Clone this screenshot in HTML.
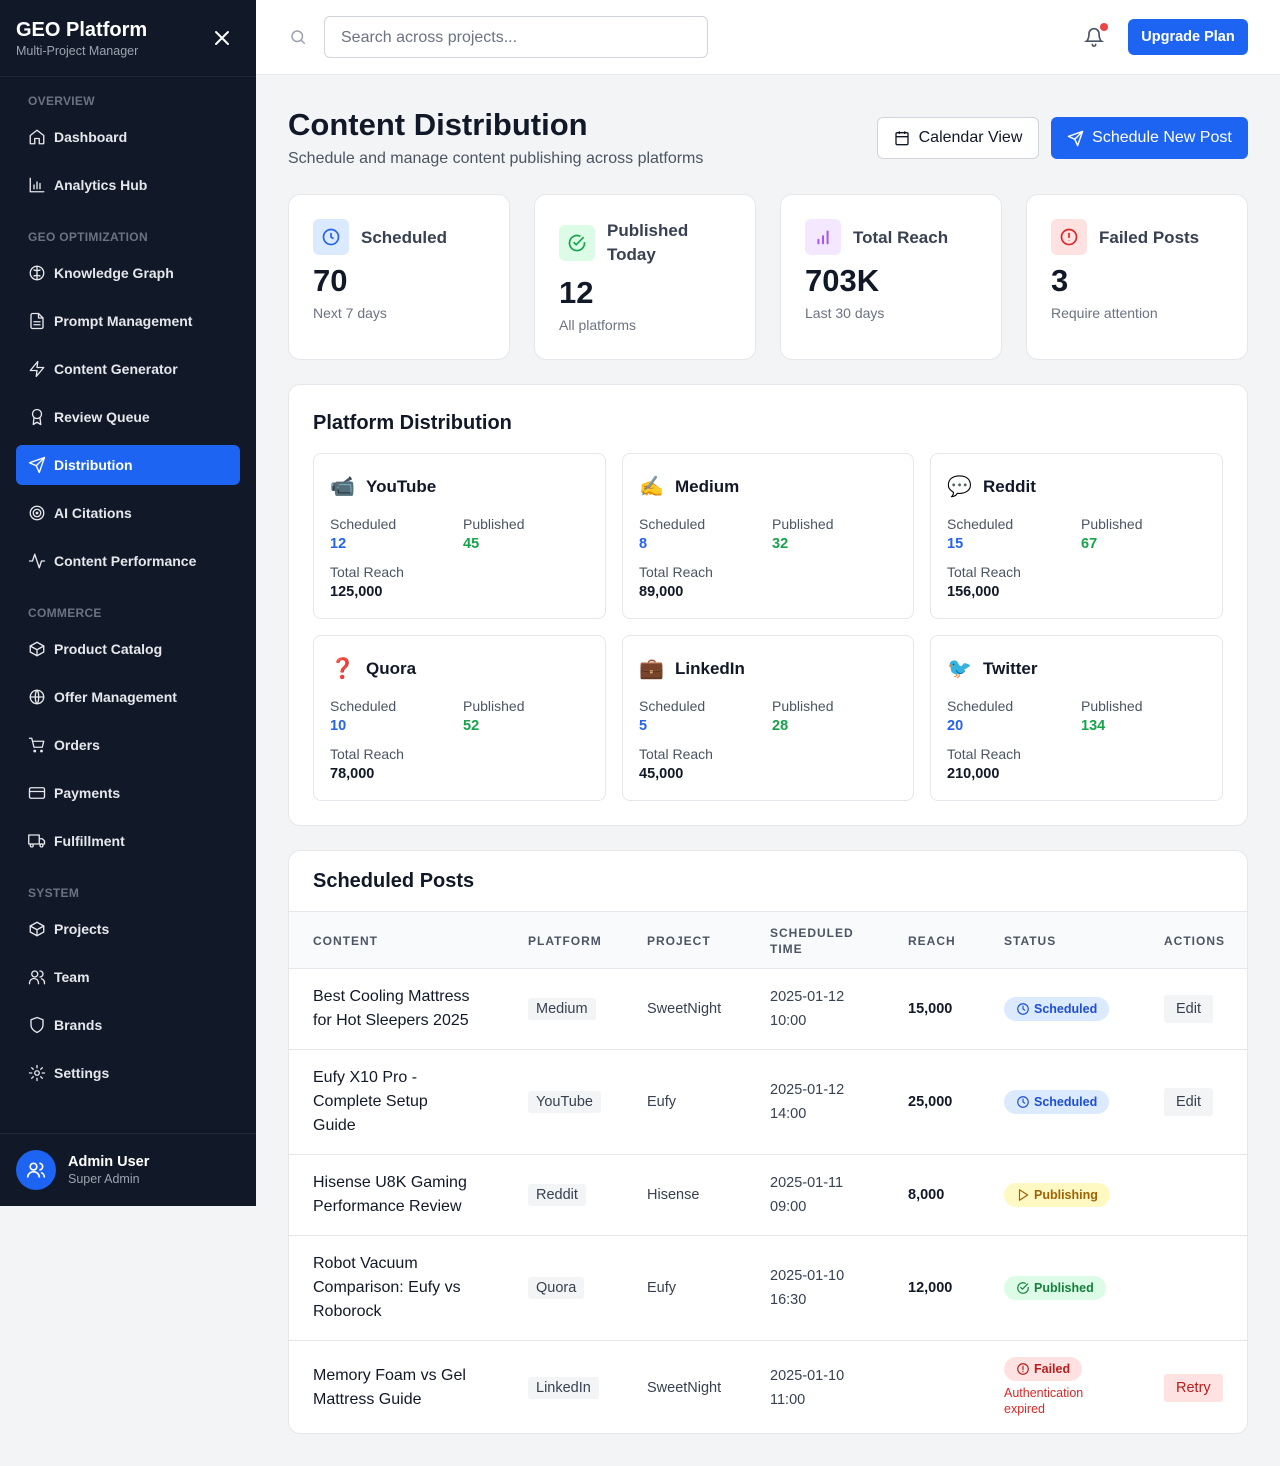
<!DOCTYPE html>
<html><head><meta charset="utf-8"><style>
*{box-sizing:border-box;margin:0;padding:0}
body{width:1280px;height:1466px;background:#f3f4f6;font-family:"Liberation Sans",Arial,sans-serif;color:#111827;position:relative;overflow:hidden}
.sb{position:absolute;left:0;top:0;width:256px;height:1206px;background:#111827;color:#e5e7eb}
.sb .hd{height:77px;border-bottom:1px solid #1f2937;padding:18px 16px}
.sb .hd b{font-size:20px;color:#fff;display:block;line-height:24px}
.sb .hd span{font-size:12.5px;color:#9ca3af}
.sb .x{position:absolute;left:213px;top:29px}
.sec{font-size:12px;font-weight:bold;color:#6b7280;padding-left:28px;letter-spacing:.3px;position:absolute}
.it{position:absolute;left:16px;width:224px;height:40px;border-radius:6px;display:flex;align-items:center;padding-left:12px;font-size:14px;font-weight:bold;color:#e5e7eb}
.it svg{width:18px;height:18px;margin-right:8px;fill:none;stroke:currentColor;stroke-width:1.8;stroke-linecap:round;stroke-linejoin:round}
.it.on{background:#1d64f2;color:#fff}
.user{position:absolute;left:0;top:1133px;width:256px;height:73px;border-top:1px solid #1f2937;display:flex;align-items:center;padding-left:16px}
.av{width:40px;height:40px;border-radius:50%;background:#1d64f2;display:flex;align-items:center;justify-content:center;margin-right:12px}
.top{position:absolute;left:256px;top:0;width:1024px;height:75px;background:#fff;border-bottom:1px solid #e5e7eb}
.search{position:absolute;left:68px;top:16px;width:384px;height:42px;border:1px solid #d1d5db;border-radius:6px;padding:0 16px;line-height:42px;color:#6b7280;font-size:16px}
.btn{position:absolute;border-radius:6px;display:flex;align-items:center;justify-content:center;font-size:16px}
.card{position:absolute;background:#fff;border:1px solid #e5e7eb;border-radius:12px}
.st .ic{position:absolute;left:24px;width:36px;height:36px;border-radius:6px;display:flex;align-items:center;justify-content:center}
.st .lb{position:absolute;left:72px;font-size:17px;font-weight:bold;color:#374151;line-height:24px}
.st .v{position:absolute;left:24px;font-size:31px;font-weight:bold}
.st .s{position:absolute;left:24px;font-size:14px;color:#6b7280}
.pc{position:absolute;border:1px solid #e5e7eb;border-radius:8px;width:293px;height:166px;background:#fff}
.pc .n{position:absolute;left:16px;top:20px;font-size:17px;font-weight:bold;display:flex;align-items:center}
.pc .n i{font-style:normal;font-size:20px;width:26px;margin-right:10px}
.pc .l{position:absolute;font-size:14px;color:#4b5563}
.pc .b{position:absolute;font-size:14.5px;font-weight:bold}
h2{position:absolute;font-size:20px;font-weight:bold}
.th{position:absolute;top:60px;left:0;width:958px;height:58px;background:#f9fafb;border-top:1px solid #e5e7eb;border-bottom:1px solid #e5e7eb;font-size:12px;font-weight:bold;color:#4b5563;letter-spacing:1px}
.th span{position:absolute;line-height:16px}
.row{position:absolute;left:0;width:958px;border-bottom:1px solid #e5e7eb;font-size:14.5px;color:#374151}
.row>*{position:absolute;top:50%;transform:translateY(-50%)}
.ct{left:24px;width:172px;font-size:16px;color:#111827;line-height:24px}
.pl{left:239px;background:#f3f4f6;padding:3px 8px;border-radius:3px;font-size:14.5px;color:#374151}
.pj{left:358px}
.tm{left:481px;line-height:24px}
.rc{left:619px;font-weight:bold;color:#111827}
.bd{left:715px;height:24px;border-radius:12px;padding:0 12px;font-size:12.5px;font-weight:bold;display:flex;align-items:center;gap:4px}
.bd svg{width:14px;height:14px;fill:none;stroke:currentColor;stroke-width:2;stroke-linecap:round;stroke-linejoin:round}
.ac{left:875px;padding:6px 12px;border-radius:3px;background:#f3f4f6;color:#374151}
</style></head><body>

<div class="sb">
<div class="hd"><b>GEO Platform</b><span>Multi-Project Manager</span></div>
<svg class="x" width="18" height="18" viewBox="0 0 18 18" stroke="#fff" stroke-width="2" stroke-linecap="round"><path d="M3 3l12 12M15 3L3 15"/></svg>
<div class="sec" style="top:94px">OVERVIEW</div>
<div class="it" style="top:117px"><svg viewBox="0 0 24 24"><path d="M3 10l9-7 9 7v10a1 1 0 0 1-1 1h-5v-7H9v7H4a1 1 0 0 1-1-1z"/></svg>Dashboard</div>
<div class="it" style="top:165px"><svg viewBox="0 0 24 24"><path d="M3 3v18h18M8 17v-5M12 17V8M16 17v-7"/></svg>Analytics Hub</div>
<div class="sec" style="top:230px">GEO OPTIMIZATION</div>
<div class="it" style="top:253px"><svg viewBox="0 0 24 24"><circle cx="12" cy="12" r="9"/><path d="M12 3v18M8 8c2 1 6 1 8 0M8 16c2-1 6-1 8 0"/></svg>Knowledge Graph</div>
<div class="it" style="top:301px"><svg viewBox="0 0 24 24"><path d="M14 2H6a2 2 0 0 0-2 2v16a2 2 0 0 0 2 2h12a2 2 0 0 0 2-2V8z"/><path d="M14 2v6h6M8 13h8M8 17h8"/></svg>Prompt Management</div>
<div class="it" style="top:349px"><svg viewBox="0 0 24 24"><path d="M13 2L3 14h9l-1 8 10-12h-9z"/></svg>Content Generator</div>
<div class="it" style="top:397px"><svg viewBox="0 0 24 24"><circle cx="12" cy="8" r="6"/><path d="M8 13l-1 9 5-3 5 3-1-9"/></svg>Review Queue</div>
<div class="it on" style="top:445px"><svg viewBox="0 0 24 24"><path d="M22 2L11 13M22 2l-7 20-4-9-9-4z"/></svg>Distribution</div>
<div class="it" style="top:493px"><svg viewBox="0 0 24 24"><circle cx="12" cy="12" r="9"/><circle cx="12" cy="12" r="5"/><circle cx="12" cy="12" r="1"/></svg>AI Citations</div>
<div class="it" style="top:541px"><svg viewBox="0 0 24 24"><path d="M22 12h-4l-3 9L9 3l-3 9H2"/></svg>Content Performance</div>
<div class="sec" style="top:606px">COMMERCE</div>
<div class="it" style="top:629px"><svg viewBox="0 0 24 24"><path d="M21 16V8l-9-5-9 5v8l9 5z"/><path d="M3 8l9 5 9-5M12 13v8"/></svg>Product Catalog</div>
<div class="it" style="top:677px"><svg viewBox="0 0 24 24"><circle cx="12" cy="12" r="9"/><path d="M3 12h18M12 3c3 3 3 15 0 18M12 3c-3 3-3 15 0 18"/></svg>Offer Management</div>
<div class="it" style="top:725px"><svg viewBox="0 0 24 24"><circle cx="9" cy="20" r="1"/><circle cx="18" cy="20" r="1"/><path d="M2 3h3l3 12h11l2-8H6"/></svg>Orders</div>
<div class="it" style="top:773px"><svg viewBox="0 0 24 24"><rect x="2" y="5" width="20" height="14" rx="2"/><path d="M2 10h20"/></svg>Payments</div>
<div class="it" style="top:821px"><svg viewBox="0 0 24 24"><path d="M1 4h14v12H1zM15 9h4l3 3v4h-7"/><circle cx="5" cy="18" r="2"/><circle cx="18" cy="18" r="2"/></svg>Fulfillment</div>
<div class="sec" style="top:886px">SYSTEM</div>
<div class="it" style="top:909px"><svg viewBox="0 0 24 24"><path d="M21 16V8l-9-5-9 5v8l9 5z"/><path d="M3 8l9 5 9-5M12 13v8"/></svg>Projects</div>
<div class="it" style="top:957px"><svg viewBox="0 0 24 24"><circle cx="9" cy="8" r="4"/><path d="M2 21v-1a6 6 0 0 1 12 0v1M16 4a4 4 0 0 1 0 8M22 21v-1a6 6 0 0 0-4-5.6"/></svg>Team</div>
<div class="it" style="top:1005px"><svg viewBox="0 0 24 24"><path d="M12 2l8 3v7c0 5-4 8-8 10-4-2-8-5-8-10V5z"/></svg>Brands</div>
<div class="it" style="top:1053px"><svg viewBox="0 0 24 24"><circle cx="12" cy="12" r="3"/><path d="M12 2v3M12 19v3M2 12h3M19 12h3M4.9 4.9l2.1 2.1M17 17l2.1 2.1M4.9 19.1L7 17M17 7l2.1-2.1"/></svg>Settings</div>
<div class="user"><div class="av"><svg width="20" height="20" viewBox="0 0 24 24" fill="none" stroke="#fff" stroke-width="2"><circle cx="9" cy="8" r="4"/><path d="M2 21a7 7 0 0 1 14 0M16 4a4 4 0 0 1 0 8M22 21a6 6 0 0 0-4-6"/></svg></div><div><div style="font-size:14.5px;font-weight:bold;color:#fff">Admin User</div><div style="font-size:12.5px;color:#9ca3af;margin-top:2px">Super Admin</div></div></div>
</div>

<div class="top">
<svg style="position:absolute;left:33px;top:28px" width="18" height="18" viewBox="0 0 24 24" fill="none" stroke="#9ca3af" stroke-width="2"><circle cx="11" cy="11" r="7"/><path d="M21 21l-5-5"/></svg>
<div class="search">Search across projects...</div>
<svg style="position:absolute;left:828px;top:27px" width="20" height="20" viewBox="0 0 24 24" fill="none" stroke="#4b5563" stroke-width="2" stroke-linecap="round"><path d="M6 8a6 6 0 0 1 12 0c0 7 3 9 3 9H3s3-2 3-9M10 21a2 2 0 0 0 4 0"/></svg>
<div style="position:absolute;left:844px;top:23px;width:8px;height:8px;border-radius:50%;background:#ef4444"></div>
<div class="btn" style="left:872px;top:19px;width:120px;height:36px;background:#1d64f2;color:#fff;font-size:14.5px;font-weight:bold">Upgrade Plan</div>
</div>

<div style="position:absolute;left:288px;top:107px;font-size:31px;font-weight:bold">Content Distribution</div>
<div style="position:absolute;left:288px;top:150px;font-size:16px;color:#4b5563">Schedule and manage content publishing across platforms</div>
<div class="btn" style="left:877px;top:117px;width:162px;height:42px;background:#fff;border:1px solid #d1d5db;color:#111827"><svg width="16" height="16" viewBox="0 0 24 24" fill="none" stroke="#111827" stroke-width="2" style="margin-right:9px"><rect x="3" y="4" width="18" height="18" rx="2"/><path d="M16 2v4M8 2v4M3 10h18"/></svg>Calendar View</div>
<div class="btn" style="left:1051px;top:117px;width:197px;height:42px;background:#1d64f2;color:#fff"><svg width="17" height="17" viewBox="0 0 24 24" fill="none" stroke="#fff" stroke-width="2" stroke-linejoin="round" style="margin-right:8px"><path d="M22 2L11 13M22 2l-7 20-4-9-9-4z"/></svg>Schedule New Post</div>

<div class="card st" style="left:288px;top:194px;width:222px;height:166px">
<div class="ic" style="top:24px;background:#dbeafe"><svg width="20" height="20" viewBox="0 0 24 24" fill="none" stroke="#2563eb" stroke-width="2"><circle cx="12" cy="12" r="9"/><path d="M12 7v5l3 2"/></svg></div>
<div class="lb" style="top:31px">Scheduled</div><div class="v" style="top:68px">70</div><div class="s" style="top:110px">Next 7 days</div></div>
<div class="card st" style="left:534px;top:194px;width:222px;height:166px">
<div class="ic" style="top:30px;background:#dcfce7"><svg width="20" height="20" viewBox="0 0 24 24" fill="none" stroke="#16a34a" stroke-width="2"><path d="M21 11v1a9 9 0 1 1-5-8"/><path d="M8 11l3 3 9-9"/></svg></div>
<div class="lb" style="top:24px">Published<br>Today</div><div class="v" style="top:80px">12</div><div class="s" style="top:122px">All platforms</div></div>
<div class="card st" style="left:780px;top:194px;width:222px;height:166px">
<div class="ic" style="top:24px;background:#f3e8ff"><svg width="22" height="22" viewBox="0 0 24 24" fill="none" stroke="#a855f7" stroke-width="2.2" stroke-linecap="round"><path d="M7 19v-4M12 19v-8M17 19V6"/></svg></div>
<div class="lb" style="top:31px">Total Reach</div><div class="v" style="top:68px">703K</div><div class="s" style="top:110px">Last 30 days</div></div>
<div class="card st" style="left:1026px;top:194px;width:222px;height:166px">
<div class="ic" style="top:24px;background:#fee2e2"><svg width="20" height="20" viewBox="0 0 24 24" fill="none" stroke="#dc2626" stroke-width="2"><circle cx="12" cy="12" r="9"/><path d="M12 7v6M12 16v.5"/></svg></div>
<div class="lb" style="top:31px">Failed Posts</div><div class="v" style="top:68px">3</div><div class="s" style="top:110px">Require attention</div></div>

<div class="card" style="left:288px;top:384px;width:960px;height:442px">
<h2 style="left:24px;top:27px">Platform Distribution</h2>
</div>
<div class="pc" style="left:313px;top:453px"><div class="n"><i>📹</i>YouTube</div><div class="l" style="left:16px;top:62px">Scheduled</div><div class="l" style="left:149px;top:62px">Published</div><div class="b" style="left:16px;top:82px;color:#2563eb">12</div><div class="b" style="left:149px;top:82px;color:#16a34a">45</div><div class="l" style="left:16px;top:110px">Total Reach</div><div class="b" style="left:16px;top:130px">125,000</div></div>
<div class="pc" style="left:622px;top:453px;width:292px"><div class="n"><i>✍️</i>Medium</div><div class="l" style="left:16px;top:62px">Scheduled</div><div class="l" style="left:149px;top:62px">Published</div><div class="b" style="left:16px;top:82px;color:#2563eb">8</div><div class="b" style="left:149px;top:82px;color:#16a34a">32</div><div class="l" style="left:16px;top:110px">Total Reach</div><div class="b" style="left:16px;top:130px">89,000</div></div>
<div class="pc" style="left:930px;top:453px"><div class="n"><i>💬</i>Reddit</div><div class="l" style="left:16px;top:62px">Scheduled</div><div class="l" style="left:150px;top:62px">Published</div><div class="b" style="left:16px;top:82px;color:#2563eb">15</div><div class="b" style="left:150px;top:82px;color:#16a34a">67</div><div class="l" style="left:16px;top:110px">Total Reach</div><div class="b" style="left:16px;top:130px">156,000</div></div>
<div class="pc" style="left:313px;top:635px"><div class="n"><i style="color:#dc2626">❓</i>Quora</div><div class="l" style="left:16px;top:62px">Scheduled</div><div class="l" style="left:149px;top:62px">Published</div><div class="b" style="left:16px;top:82px;color:#2563eb">10</div><div class="b" style="left:149px;top:82px;color:#16a34a">52</div><div class="l" style="left:16px;top:110px">Total Reach</div><div class="b" style="left:16px;top:130px">78,000</div></div>
<div class="pc" style="left:622px;top:635px;width:292px"><div class="n"><i>💼</i>LinkedIn</div><div class="l" style="left:16px;top:62px">Scheduled</div><div class="l" style="left:149px;top:62px">Published</div><div class="b" style="left:16px;top:82px;color:#2563eb">5</div><div class="b" style="left:149px;top:82px;color:#16a34a">28</div><div class="l" style="left:16px;top:110px">Total Reach</div><div class="b" style="left:16px;top:130px">45,000</div></div>
<div class="pc" style="left:930px;top:635px"><div class="n"><i>🐦</i>Twitter</div><div class="l" style="left:16px;top:62px">Scheduled</div><div class="l" style="left:150px;top:62px">Published</div><div class="b" style="left:16px;top:82px;color:#2563eb">20</div><div class="b" style="left:150px;top:82px;color:#16a34a">134</div><div class="l" style="left:16px;top:110px">Total Reach</div><div class="b" style="left:16px;top:130px">210,000</div></div>

<div class="card" style="left:288px;top:850px;width:960px;height:584px;overflow:hidden">
<h2 style="left:24px;top:19px">Scheduled Posts</h2>
<div class="th"><span style="left:24px;top:21px">CONTENT</span><span style="left:239px;top:21px">PLATFORM</span><span style="left:358px;top:21px">PROJECT</span><span style="left:481px;top:13px">SCHEDULED<br>TIME</span><span style="left:619px;top:21px">REACH</span><span style="left:715px;top:21px">STATUS</span><span style="left:875px;top:21px">ACTIONS</span></div>

<div class="row" style="top:118px;height:81px"><div class="ct">Best Cooling Mattress for Hot Sleepers 2025</div><div class="pl">Medium</div><div class="pj">SweetNight</div><div class="tm">2025-01-12<br>10:00</div><div class="rc">15,000</div><div class="bd" style="background:#dbeafe;color:#1d4ed8"><svg viewBox="0 0 24 24"><circle cx="12" cy="12" r="9"/><path d="M12 7v5l3 2"/></svg>Scheduled</div><div class="ac">Edit</div></div>
<div class="row" style="top:199px;height:105px"><div class="ct">Eufy X10 Pro -<br>Complete Setup<br>Guide</div><div class="pl">YouTube</div><div class="pj">Eufy</div><div class="tm">2025-01-12<br>14:00</div><div class="rc">25,000</div><div class="bd" style="background:#dbeafe;color:#1d4ed8"><svg viewBox="0 0 24 24"><circle cx="12" cy="12" r="9"/><path d="M12 7v5l3 2"/></svg>Scheduled</div><div class="ac">Edit</div></div>
<div class="row" style="top:304px;height:81px"><div class="ct">Hisense U8K Gaming Performance Review</div><div class="pl">Reddit</div><div class="pj">Hisense</div><div class="tm">2025-01-11<br>09:00</div><div class="rc">8,000</div><div class="bd" style="background:#fef9c3;color:#a16207"><svg viewBox="0 0 24 24"><path d="M6 3l14 9-14 9z"/></svg>Publishing</div></div>
<div class="row" style="top:385px;height:105px"><div class="ct">Robot Vacuum Comparison: Eufy vs Roborock</div><div class="pl">Quora</div><div class="pj">Eufy</div><div class="tm">2025-01-10<br>16:30</div><div class="rc">12,000</div><div class="bd" style="background:#dcfce7;color:#15803d"><svg viewBox="0 0 24 24"><path d="M21 11v1a9 9 0 1 1-5-8"/><path d="M8 11l3 3 9-9"/></svg>Published</div></div>
<div class="row" style="top:490px;height:94px;border-bottom:none"><div class="ct">Memory Foam vs Gel Mattress Guide</div><div class="pl">LinkedIn</div><div class="pj">SweetNight</div><div class="tm">2025-01-10<br>11:00</div>
<div style="left:715px;top:16px;transform:none"><div class="bd" style="position:static;display:inline-flex;background:#fee2e2;color:#b91c1c"><svg viewBox="0 0 24 24"><circle cx="12" cy="12" r="9"/><path d="M12 7v6M12 16v.5"/></svg>Failed</div><div style="font-size:12.5px;color:#dc2626;line-height:16px;margin-top:4px">Authentication<br>expired</div></div>
<div class="ac" style="background:#fee2e2;color:#b91c1c">Retry</div></div>
</div>
</body></html>
